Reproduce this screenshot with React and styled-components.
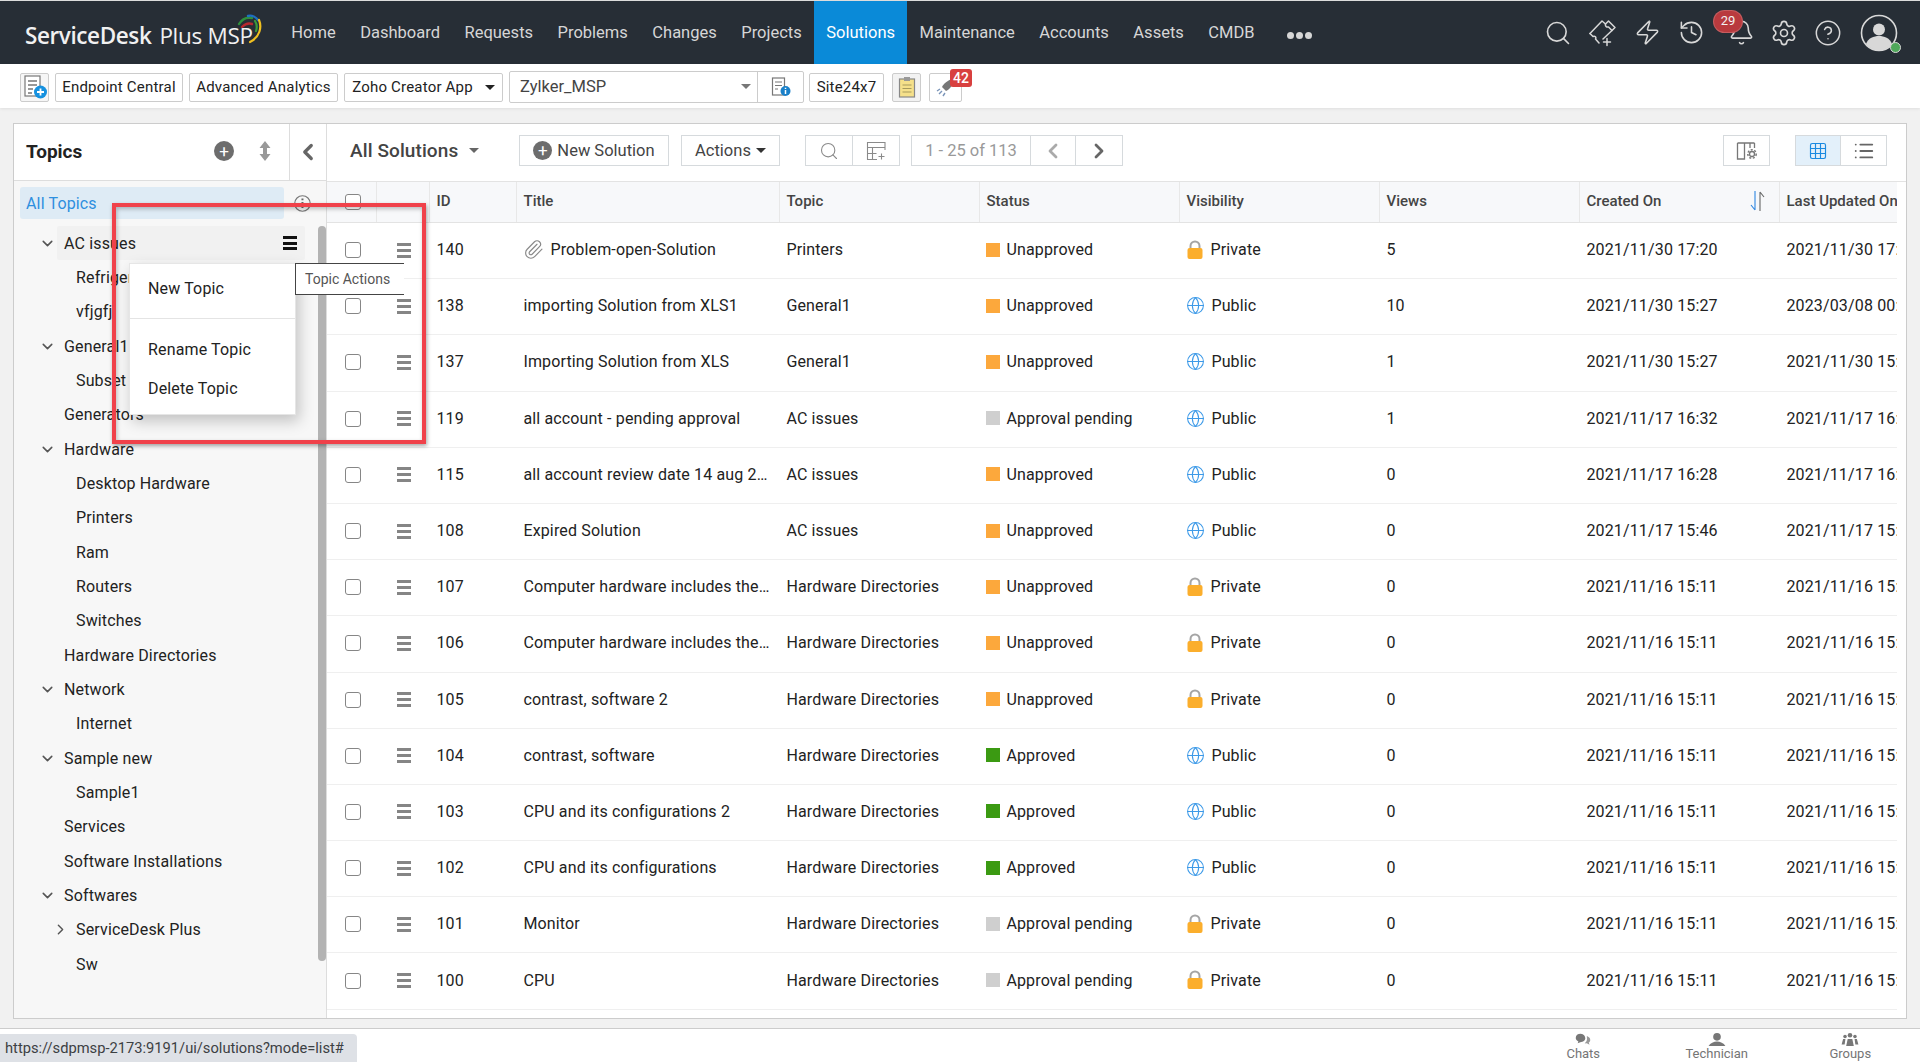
import React from "react";
import styled, { createGlobalStyle } from "styled-components";
import { Search, Zap, History, Bell, Settings, CircleHelp, Paperclip, Globe, ChevronDown, ChevronRight, ChevronLeft, Grid3x3, List } from "lucide-react";

const Global = createGlobalStyle`
  html, body { margin: 0; padding: 0; height: 100%; background: #f1f1f1; }
  body { font-family: Roboto, "Liberation Sans", sans-serif; font-size: 16px; color: #222; }
  * { box-sizing: border-box; }
`;

const Page = styled.div`
  position: relative; width: 1920px; height: 1062px; overflow: hidden;
  display: flex; flex-direction: column; background: #f1f1f1;
`;

/* ---------- top nav ---------- */
const Nav = styled.header`
  height: 64px; flex: none; display: flex; align-items: stretch;
  background: #272e36; border-top: 1px solid #dcdcdc; padding-left: 25px; padding-right: 19px;
`;
const Logo = styled.div`
  position: relative; width: 234px; display: flex; align-items: center; gap: 8px;
  font-family: "Open Sans", sans-serif; font-size: 22.5px; color: #f1f1f1; white-space: nowrap; padding-top: 6px;
`;
const LogoStrong = styled.span` font-weight: 600; letter-spacing: -0.4px; `;
const LogoLight = styled.span` font-weight: 400; letter-spacing: -0.3px; `;
const LogoArc = styled.svg` position: absolute; left: 210px; top: 12px; `;
const NavMenu = styled.nav` display: flex; align-items: stretch; margin-left: 20px; `;
const NavItem = styled.a`
  display: flex; align-items: center; padding: 0 12.25px; font-size: 16.5px; color: #d6d6d6;
  background: ${p => (p.$active ? "#0a8ad8" : "transparent")};
  ${p => p.$active && "color:#fff;"}
`;
const Dots = styled.span`
  display: flex; align-items: center; gap: 2px; margin-left: 20px; padding-top: 5px;
  i { width: 7px; height: 7px; border-radius: 50%; background: #d6d6d6; display: block; }
`;
const NavIcons = styled.div` margin-left: auto; display: flex; align-items: center; color: #d8d8d8; `;
const IconSlot = styled.div`
  position: relative; width: ${p => p.$w}px; display: flex; justify-content: center; align-items: center;
  svg { display: block; }
`;
const NavBadge = styled.span`
  position: absolute; left: 1px; top: -8px; width: 28px; height: 21px; border-radius: 11px;
  background: #b93a3e; color: #f2f2f2; font-size: 13px; line-height: 20px; text-align: center; box-shadow: 0 0 0 1px #c65c5f;
`;
const OnlineDot = styled.span`
  position: absolute; right: 0px; bottom: -1px; width: 11px; height: 11px; border-radius: 50%;
  background: #4fa85a; border: 1px solid #d8d8d8;
`;

/* ---------- quick toolbar ---------- */
const QuickBar = styled.div`
  height: 44px; flex: none; background: #fff; display: flex; align-items: center; padding-left: 20px;
  box-shadow: 0 1px 3px rgba(0,0,0,.08); position: relative; padding-top: 1px;
`;
const QuickBtn = styled.div`
  position: relative; height: 29px; width: ${p => p.$w}px; margin-left: ${p => p.$ml ?? 6}px; flex: none;
  border: 1px solid #ccc; border-radius: 2px; background: ${p => p.$bg || "#fff"};
  display: flex; align-items: center; justify-content: center; gap: 12px; font-size: 15px; letter-spacing: .2px; color: #222;
  white-space: nowrap; margin-top: 1px;
`;
const Caret = styled.span`
  width: 0; height: 0; border-left: 5px solid transparent; border-right: 5px solid transparent;
  border-top: 5px solid ${p => p.$c || "#222"}; display: inline-block; flex: none;
`;
const Combo = styled.div`
  margin-left: 6px; width: 295px; height: 32px; border: 1px solid #ccc; border-radius: 2px; display: flex; flex: none;
`;
const ComboValue = styled.div`
  width: 248px; border-right: 1px solid #ccc; display: flex; align-items: center; justify-content: space-between;
  padding: 0 6px 0 10px; font-size: 16.5px; color: #444;
`;
const ComboIcon = styled.div` flex: 1; display: flex; align-items: center; justify-content: center; `;
const CountBadge = styled.span`
  position: absolute; left: 20px; top: -5px; width: 22px; height: 18px; background: #d8403f; color: #fff;
  font-size: 14px; font-weight: 500; line-height: 18px; text-align: center; border-radius: 3px; letter-spacing: 0;
`;

/* ---------- main panel ---------- */
const Content = styled.main` flex: 1; min-height: 0; padding: 15px 13px 9px 13px; display: flex; `;
const Panel = styled.div`
  flex: 1; display: flex; background: #fff; border: 1px solid #ccc; min-width: 0;
`;
const Sidebar = styled.aside`
  width: 313px; flex: none; background: #f7f7f7; border-right: 1px solid #ddd; display: flex; flex-direction: column; position: relative;
`;
const SideHead = styled.div`
  height: 57px; flex: none; background: #fff; border-bottom: 1px solid #ddd; display: flex; align-items: center; padding-left: 12px;
`;
const SideTitle = styled.h2` margin: 0 0 2px; font-size: 19px; font-weight: 700; color: #222; flex: 1; `;
const SideTools = styled.div`
  display: flex; align-items: center; gap: 25px; padding: 0 18px 2px 0; color: #6b6b6b;
`;
const Collapse = styled.div`
  width: 37px; height: 100%; border-left: 1px solid #ddd; display: flex; align-items: center; justify-content: center; color: #666;
`;
const AllRow = styled.div` display: flex; align-items: center; gap: 10px; padding: 6px 15px 0 6px; `;
const AllLabel = styled.div`
  width: 265px; height: 32px; border-radius: 3px; background: #deebf5; color: #2e8fdf; font-size: 16px; letter-spacing: .15px;
  display: flex; align-items: center; padding-left: 6px;
`;
const Tree = styled.div` margin-top: 7px; padding-right: 21px; `;
const TreeRow = styled.div`
  height: 34.33px; display: flex; align-items: center; padding-left: ${p => p.$indent}px; font-size: 16px; letter-spacing: .15px; color: #222;
`;
const CaretSlot = styled.span` width: ${p => p.$w}px; flex: none; display: flex; color: #555; svg { display:block; } `;
const TreeLabel = styled.span`
  flex: 1; height: 100%; display: flex; align-items: center; justify-content: space-between;
  ${p => p.$hot && "background:#f1f1f1; margin-left:-7px; padding:0 8px 0 7px; border-radius:2px;"}
`;
const HamBlack = styled.span`
  width: 14px; height: 14px; display: flex; flex-direction: column; justify-content: space-between;
  i { height: 3px; background: #111; display: block; }
`;
const Scroll = styled.div`
  position: absolute; left: 304px; top: 102px; width: 8px; height: 735px; border-radius: 4px; background: #b3b3b3;
`;

const Main = styled.section` flex: 1; min-width: 0; display: flex; flex-direction: column; padding-right: 9px; `;
const ToolBar = styled.div`
  height: 58px; flex: none; display: flex; align-items: center; margin-right: -9px; padding: 0 19px 4px 23px; border-bottom: 1px solid #e3e3e3;
`;
const ListTitle = styled.div`
  display: flex; align-items: center; gap: 11px; width: 169px; font-size: 19px; font-weight: 500; letter-spacing: .1px; color: #444;
`;
const ToolBtn = styled.div`
  height: 31px; width: ${p => p.$w}px; margin-left: ${p => p.$ml ?? 0}px; flex: none; display: flex; align-items: center; justify-content: center; gap: 5px;
  border: 1px solid #d6dadd; background: ${p => p.$bg || "#fff"}; font-size: 16.5px; color: #444; white-space: nowrap;
  ${p => p.$tight && "margin-left:-1px;"}
`;
const RoundPlus = styled.span`
  width: ${p => p.$s || 19}px; height: ${p => p.$s || 19}px; border-radius: 50%; background: #6d6d6d; color: #fff; display: flex; align-items: center; justify-content: center; font-size: 17px; line-height: 1;
`;
const Pager = styled(ToolBtn)` color: #999; `;
const Spacer = styled.div` flex: 1; `;

const Table = styled.div` flex: 1; overflow: hidden; min-width: 0; `;
const Grid = styled.div`
  display: grid; width: 1750px; grid-template-columns: 50px 53px 87px 263px 200px 200px 200px 200px 200px 297px;
  align-items: stretch; height: ${p => (p.$head ? "41px" : "56.2px")};
  background: ${p => (p.$head ? "#f7f8fa" : "#fff")};
  border-bottom: 1px solid ${p => (p.$head ? "#e3e3e3" : "#efefef")};
`;
const Head = styled.div`
  display: flex; align-items: center; justify-content: space-between; padding: 0 7px 2px 6.5px; font-size: 15px; font-weight: 500; color: #444;
  border-right: 1px solid #e8e8e8; white-space: nowrap; overflow: hidden;
`;
const Cell = styled.div`
  display: flex; align-items: center; gap: 6px; padding: 0 7px 2px 6.4px; font-size: 16px; letter-spacing: .15px; color: #222; min-width: 0; white-space: nowrap; overflow: hidden;
  ${p => p.$center && "justify-content:center; padding:0 0 1px;"}
  ${p => p.$divide && "border-right:1px solid #e8e8e8;"}
`;
const Ellipsis = styled.span` overflow: hidden; text-overflow: ellipsis; min-width: 0; `;
const Check = styled.span`
  width: 16px; height: 16px; border: 1px solid #868686; border-radius: 3px; background: #fff; display: block; margin-left: 2px;
`;
const Ham = styled.span`
  width: 14px; height: 15px; display: flex; flex-direction: column; justify-content: space-between;
  i { height: 3px; background: #858585; display: block; }
`;
const Swatch = styled.span` width: 14px; height: 14px; background: ${p => p.$c}; flex: none; `;
const SortWrap = styled.span` display: flex; margin-right: 6px; `;

/* ---------- footer ---------- */
const Footer = styled.footer`
  height: 34px; flex: none; background: #fff; border-top: 1px solid #ccc; display: flex; justify-content: flex-end; padding-right: 3px; overflow: hidden;
`;
const FootItem = styled.div`
  width: 133.5px; display: flex; flex-direction: column; align-items: center; color: #757575; font-size: 13px; line-height: 16px; padding-top: 4px;
  svg { display: block; height: 17px; }
`;
const Bubble = styled.div`
  position: absolute; left: 0; bottom: 0; width: 357px; height: 28px; background: #dee1e6; border-top-right-radius: 4px;
  font-size: 14.7px; color: #3c4043; display: flex; align-items: center; padding-left: 5px; white-space: nowrap;
`;

/* ---------- overlays ---------- */
const Popup = styled.div`
  position: absolute; left: 129px; top: 263px; width: 167px; height: 152px; background: #fff;
  border: 1px solid #e6e6e6; box-shadow: 3px 6px 14px rgba(0,0,0,.22); display: flex; flex-direction: column;
`;
const PopItem = styled.div` height: ${p => p.$h}px; flex: none; display: flex; align-items: center; padding-left: 18px; font-size: 16px; letter-spacing: .15px; color: #222; `;
const PopLine = styled.div` height: 1px; flex: none; background: #e4e4e4; margin: 5px 0 11px; `;
const Tip = styled.div`
  position: absolute; left: 295px; top: 263px; width: 109px; height: 32px; background: #fff;
  border: 1px solid #444; border-right: none; display: flex; align-items: center; padding-left: 9px; font-size: 14px; color: #555; white-space: nowrap;
`;
const RedBox = styled.div`
  position: absolute; left: 112px; top: 203px; width: 314px; height: 241px; border: 4px solid #f0414a; pointer-events: none;
  box-shadow: 1px 2px 4px rgba(0,0,0,.35), inset 1px 2px 4px rgba(0,0,0,.25);
`;

/* ---------- drawn icons ---------- */
const Avatar = () => (
  <svg width="38" height="38" viewBox="0 0 38 38" fill="none">
    <circle cx="19" cy="19" r="17.5" stroke="#d8d8d8" strokeWidth="1.6" />
    <circle cx="19" cy="15.5" r="6" fill="#d8d8d8" />
    <path d="M6 30c2-6 8-8 13-8s11 2 13 8c-3 4-8 6.5-13 6.5S9 34 6 30z" fill="#d8d8d8" />
  </svg>
);
const TicketAdd = () => (
  <svg width="28" height="28" viewBox="0 0 28 28" fill="none" stroke="#d8d8d8" strokeWidth="1.5" strokeLinejoin="round" strokeLinecap="round">
    <path d="M1 14.500L13 2l3.500 3c-.5 2 1 3.500 3 3l3.500 3.500-9 8.500" />
    <path d="M16.500 5l3-3L26 8.500l-3 3" />
    <path d="M1 14.500l3 3c2-1 3.500 1 2.500 2.500l3.500 4" />
    <path d="M18 19.500v7M14.500 23h7" />
  </svg>
);
const AddDoc = () => (
  <svg width="26" height="26" viewBox="0 0 26 26" fill="none">
    <rect x="3" y="2" width="15" height="20" stroke="#777" strokeWidth="1.2" fill="#fff" />
    <path d="M6 7h9M6 11h9M6 15h5M6 19h4" stroke="#777" strokeWidth="1.3" />
    <circle cx="18.5" cy="18" r="6.5" fill="#1691df" />
    <path d="M18.5 14.5v7M15 18h7" stroke="#fff" strokeWidth="1.8" />
  </svg>
);
const InfoDoc = () => (
  <svg width="20" height="20" viewBox="0 0 20 20" fill="none">
    <rect x="1.5" y="1" width="12" height="17" stroke="#777" strokeWidth="1.2" />
    <path d="M4 5h7M4 8.5h7M4 12h3" stroke="#777" strokeWidth="1.2" />
    <circle cx="14.5" cy="14" r="5" fill="#1a80c9" />
    <path d="M14.5 13v4M14.5 10.7v1.3" stroke="#fff" strokeWidth="1.5" />
  </svg>
);
const Clip = () => (
  <svg width="18" height="22" viewBox="0 0 18 22">
    <rect x="1.5" y="3" width="15" height="18" fill="#f5e08a" stroke="#888" strokeWidth="1.2" />
    <rect x="6" y="1" width="6" height="4" fill="#999" />
    <path d="M4.5 9h9M4.5 12.5h9M4.5 16h9" stroke="#a79a5c" strokeWidth="1" />
  </svg>
);
const Rocket = () => (
  <svg width="22" height="22" viewBox="0 0 22 22" fill="none">
    <path d="M18 3c-5 1-9 4-11 8l4 4c4-2 7-6 8-11z" fill="#777" />
    <path d="M7 15l-3 3M10 17l-2 3M5 13l-3 2" stroke="#7a94b8" strokeWidth="1.4" />
  </svg>
);
const UpDown = () => (
  <svg width="12" height="20" viewBox="0 0 12 20"><path d="M6 0l5.5 7H8v6h3.500L6 20 .5 13H4V7H.5z" fill="#999" /></svg>
);
const InfoCircle = () => (
  <svg width="17" height="17" viewBox="0 0 17 17" fill="none">
    <circle cx="8.5" cy="8.5" r="7.8" stroke="#777" strokeWidth="1.1" />
    <path d="M8.5 7v6M8.5 3.600v1.600" stroke="#666" strokeWidth="2" />
  </svg>
);
const TableAdd = () => (
  <svg width="20" height="20" viewBox="0 0 20 20" fill="none" stroke="#8a8a8a" strokeWidth="1.1">
    <path d="M19 9V1.500H1.500v17H11M1.500 6.500H19M6.500 6.500v12M1.500 12.500h9" />
    <path d="M15.500 12.500v6M12.500 15.500h6" />
  </svg>
);
const ColGear = () => (
  <svg width="22" height="22" viewBox="0 0 22 22" fill="none" stroke="#777" strokeWidth="1.3">
    <path d="M1.500 3h17M1.500 3v16h7V3M14 3v5M18.500 3v5" />
    <circle cx="16" cy="14" r="2.500" />
    <circle cx="16" cy="14" r="4.200" strokeDasharray="2 1.600" strokeWidth="1.500" />
  </svg>
);
const SortIcon = () => (
  <svg width="16" height="22" viewBox="0 0 16 22" fill="none">
    <path d="M5 1v19M5 20l-4-5" stroke="#2f86e0" strokeWidth="1.100" />
    <path d="M10 21V2M10 2l4 5" stroke="#666" strokeWidth="1.100" />
  </svg>
);
const Lock = () => (
  <svg width="18" height="20" viewBox="0 0 18 20" fill="none">
    <path d="M4.500 9V6a4.500 4.500 0 0 1 9 0v3" stroke="#a5a5a5" strokeWidth="2" />
    <rect x="1.500" y="8" width="15" height="11" rx="2" fill="#fbae2c" />
  </svg>
);
const ChatIcon = () => (
  <svg width="20" height="17" viewBox="0 0 20 17"><path d="M13 10c0 3-3 5-6.500 5L3 16.500l1-2.500C2 13 .5 11.500.5 9.500.5 6 3 4 7 4s6 3 6 6z" fill="#777" transform="translate(0 -3)" /><path d="M15 4c2.500 1 4.500 2.500 4.500 5 0 1.500-.8 2.700-2 3.500l1 3-3.500-2c-1 .2-2 .1-2.800-.1 2-1.500 3.300-3.500 3-6.500z" fill="#999" /></svg>
);
const PersonIcon = () => (
  <svg width="28" height="17" viewBox="0 0 28 17"><circle cx="14" cy="5" r="5" fill="#777" /><path d="M3 17c2-4 7-6 11-6s9 2 11 6z" fill="#777" /></svg>
);
const GroupIcon = () => (
  <svg width="22" height="17" viewBox="0 0 22 17" fill="#777">
    <circle cx="11" cy="3" r="3" /><circle cx="4.500" cy="4.500" r="2.300" /><circle cx="17.500" cy="4.500" r="2.300" />
    <path d="M6 17l2-9h6l2 9zM0 15l2-7h3l-1 7zM22 15l-2-7h-3l1 7z" />
  </svg>
);

/* ---------- data ---------- */
const menu = ["Home", "Dashboard", "Requests", "Problems", "Changes", "Projects", "Solutions", "Maintenance", "Accounts", "Assets", "CMDB"];
const tree = [
  { t: "AC issues", indent: 25, caret: "d", hot: true },
  { t: "Refrigerators", indent: 62 }, { t: "vfjgfj", indent: 62 },
  { t: "General1", indent: 25, caret: "d" }, { t: "Subset", indent: 62 }, { t: "Generators", indent: 50 },
  { t: "Hardware", indent: 25, caret: "d" }, { t: "Desktop Hardware", indent: 62 }, { t: "Printers", indent: 62 },
  { t: "Ram", indent: 62 }, { t: "Routers", indent: 62 }, { t: "Switches", indent: 62 },
  { t: "Hardware Directories", indent: 50 },
  { t: "Network", indent: 25, caret: "d" }, { t: "Internet", indent: 62 },
  { t: "Sample new", indent: 25, caret: "d" }, { t: "Sample1", indent: 62 },
  { t: "Services", indent: 50 }, { t: "Software Installations", indent: 50 },
  { t: "Softwares", indent: 25, caret: "d" },
  { t: "ServiceDesk Plus", indent: 38, caret: "r" }, { t: "Sw", indent: 62 },
];
const U = "Unapproved", P = "Approval pending", A = "Approved";
const statusColor = { [U]: "#fca83c", [P]: "#cfcfcf", [A]: "#3b9a12" };
const HD = "Hardware Directories";
const rows = [
  [140, "Problem-open-Solution", "Printers", U, 0, "5", "2021/11/30 17:20", "2021/11/30 17:20", true],
  [138, "importing Solution from XLS1", "General1", U, 1, "10", "2021/11/30 15:27", "2023/03/08 00:15"],
  [137, "Importing Solution from XLS", "General1", U, 1, "1", "2021/11/30 15:27", "2021/11/30 15:27"],
  [119, "all account - pending approval", "AC issues", P, 1, "1", "2021/11/17 16:32", "2021/11/17 16:32"],
  [115, "all account review date 14 aug 2021 solution", "AC issues", U, 1, "0", "2021/11/17 16:28", "2021/11/17 16:28"],
  [108, "Expired Solution", "AC issues", U, 1, "0", "2021/11/17 15:46", "2021/11/17 15:46"],
  [107, "Computer hardware includes the physical parts", HD, U, 0, "0", "2021/11/16 15:11", "2021/11/16 15:11"],
  [106, "Computer hardware includes the physical parts", HD, U, 0, "0", "2021/11/16 15:11", "2021/11/16 15:11"],
  [105, "contrast, software 2", HD, U, 0, "0", "2021/11/16 15:11", "2021/11/16 15:11"],
  [104, "contrast, software", HD, A, 1, "0", "2021/11/16 15:11", "2021/11/16 15:11"],
  [103, "CPU and its configurations 2", HD, A, 1, "0", "2021/11/16 15:11", "2021/11/16 15:11"],
  [102, "CPU and its configurations", HD, A, 1, "0", "2021/11/16 15:11", "2021/11/16 15:11"],
  [101, "Monitor", HD, P, 0, "0", "2021/11/16 15:11", "2021/11/16 15:11"],
  [100, "CPU", HD, P, 0, "0", "2021/11/16 15:11", "2021/11/16 15:11"],
];
const Bars = ({ as: C }) => <C><i /><i /><i /></C>;

export default function App() {
  return (
    <Page>
      <Global />
      <Nav>
        <Logo>
          <LogoStrong>ServiceDesk</LogoStrong><LogoLight>Plus MSP</LogoLight>
          <LogoArc width="28" height="32" viewBox="0 0 28 32" fill="none" strokeLinecap="round">
            <path d="M4 11C7 6 12 4 17 5" stroke="#2f8f3c" strokeWidth="2.4" />
            <path d="M13 3c4-1 8 1 10 4" stroke="#1f6fc0" strokeWidth="2.4" />
            <path d="M20 8c2 3 2 7 1 10" stroke="#3a9a3a" strokeWidth="2.2" />
            <path d="M24 7c3 7 1 17-9 22" stroke="#f0c020" strokeWidth="2.2" />
            <path d="M7 14c3-3 7-4 10-3" stroke="#b8282e" strokeWidth="2.4" />
          </LogoArc>
        </Logo>
        <NavMenu>
          {menu.map(m => <NavItem key={m} $active={m === "Solutions"}>{m}</NavItem>)}
          <Dots><i /><i /><i /></Dots>
        </NavMenu>
        <NavIcons>
          <IconSlot $w={45}><Search size={28} strokeWidth={1.4} /></IconSlot>
          <IconSlot $w={45}><TicketAdd /></IconSlot>
          <IconSlot $w={44}><Zap size={27} strokeWidth={1.4} /></IconSlot>
          <IconSlot $w={44}><History size={27} strokeWidth={1.4} /></IconSlot>
          <IconSlot $w={56}><Bell size={27} strokeWidth={1.4} /><NavBadge>29</NavBadge></IconSlot>
          <IconSlot $w={30}><Settings size={28} strokeWidth={1.4} /></IconSlot>
          <IconSlot $w={58}><CircleHelp size={28} strokeWidth={1.3} /></IconSlot>
          <IconSlot $w={44}><Avatar /><OnlineDot /></IconSlot>
        </NavIcons>
      </Nav>

      <QuickBar>
        <QuickBtn $w={29} $ml={0} $bg="#f6f6f6"><AddDoc /></QuickBtn>
        <QuickBtn $w={128}>Endpoint Central</QuickBtn>
        <QuickBtn $w={149}>Advanced Analytics</QuickBtn>
        <QuickBtn $w={159}>Zoho Creator App<Caret /></QuickBtn>
        <Combo>
          <ComboValue>Zylker_MSP<Caret $c="#777" /></ComboValue>
          <ComboIcon><InfoDoc /></ComboIcon>
        </Combo>
        <QuickBtn $w={75} $ml={5}>Site24x7</QuickBtn>
        <QuickBtn $w={29} $ml={8} $bg="#f2f2f2"><Clip /></QuickBtn>
        <QuickBtn $w={33} $ml={8}><Rocket /><CountBadge>42</CountBadge></QuickBtn>
      </QuickBar>

      <Content>
        <Panel>
          <Sidebar>
            <SideHead>
              <SideTitle>Topics</SideTitle>
              <SideTools>
                <RoundPlus $s={20}>+</RoundPlus>
                <UpDown />
              </SideTools>
              <Collapse><ChevronLeft size={26} strokeWidth={3} /></Collapse>
            </SideHead>
            <AllRow>
              <AllLabel>All Topics</AllLabel>
              <InfoCircle />
            </AllRow>
            <Tree>
              {tree.map(n => (
                <TreeRow key={n.t} $indent={n.indent}>
                  {n.caret === "d" && <CaretSlot $w={25}><ChevronDown size={17} strokeWidth={2.2} /></CaretSlot>}
                  {n.caret === "r" && <CaretSlot $w={24}><ChevronRight size={17} strokeWidth={2} /></CaretSlot>}
                  <TreeLabel $hot={n.hot}>{n.t}{n.hot && <Bars as={HamBlack} />}</TreeLabel>
                </TreeRow>
              ))}
            </Tree>
            <Scroll />
          </Sidebar>

          <Main>
            <ToolBar>
              <ListTitle>All Solutions<Caret $c="#666" /></ListTitle>
              <ToolBtn $w={150}><RoundPlus>+</RoundPlus>New Solution</ToolBtn>
              <ToolBtn $w={99} $ml={12}>Actions<Caret $c="#333" /></ToolBtn>
              <ToolBtn $w={48} $ml={25}><Search size={20} strokeWidth={1.3} color="#8a8a8a" /></ToolBtn>
              <ToolBtn $w={48} $tight><TableAdd /></ToolBtn>
              <Pager $w={120} $ml={11}>1 - 25 of 113</Pager>
              <ToolBtn $w={46} $tight><ChevronLeft size={24} strokeWidth={2.8} color="#aaa" /></ToolBtn>
              <ToolBtn $w={48} $tight><ChevronRight size={24} strokeWidth={2.8} color="#666" /></ToolBtn>
              <Spacer />
              <ToolBtn $w={47}><ColGear /></ToolBtn>
              <ToolBtn $w={46} $ml={25} $bg="#e3f0fa"><Grid3x3 size={20} strokeWidth={1.4} color="#1a8ae0" /></ToolBtn>
              <ToolBtn $w={47} $tight><List size={22} strokeWidth={2} color="#666" /></ToolBtn>
            </ToolBar>
            <Table>
              <Grid $head>
                <Cell $center $divide><Check /></Cell>
                <Head />
                <Head>ID</Head><Head>Title</Head><Head>Topic</Head><Head>Status</Head><Head>Visibility</Head><Head>Views</Head>
                <Head>Created On<SortWrap><SortIcon /></SortWrap></Head>
                <Head>Last Updated On</Head>
              </Grid>
              {rows.map(r => (
                <Grid key={r[0]}>
                  <Cell $center><Check /></Cell>
                  <Cell $center><Bars as={Ham} /></Cell>
                  <Cell>{r[0]}</Cell>
                  <Cell>{r[8] && <Paperclip size={21} strokeWidth={1.3} color="#888" style={{ flex: "none" }} />}<Ellipsis>{r[1]}</Ellipsis></Cell>
                  <Cell>{r[2]}</Cell>
                  <Cell><Swatch $c={statusColor[r[3]]} />{r[3]}</Cell>
                  <Cell>{r[4] ? <Globe size={19} strokeWidth={1.3} color="#3d9ae8" /> : <Lock />}{r[4] ? "Public" : "Private"}</Cell>
                  <Cell>{r[5]}</Cell>
                  <Cell>{r[6]}</Cell>
                  <Cell>{r[7]}</Cell>
                </Grid>
              ))}
            </Table>
          </Main>
        </Panel>
      </Content>

      <Footer>
        <FootItem><ChatIcon />Chats</FootItem>
        <FootItem><PersonIcon />Technician</FootItem>
        <FootItem><GroupIcon />Groups</FootItem>
      </Footer>
      <Bubble>https://sdpmsp-2173:9191/ui/solutions?mode=list#</Bubble>

      <Popup>
        <PopItem $h={49}>New Topic</PopItem>
        <PopLine />
        <PopItem $h={39}>Rename Topic</PopItem>
        <PopItem $h={39}>Delete Topic</PopItem>
      </Popup>
      <Tip>Topic Actions</Tip>
      <RedBox />
    </Page>
  );
}
